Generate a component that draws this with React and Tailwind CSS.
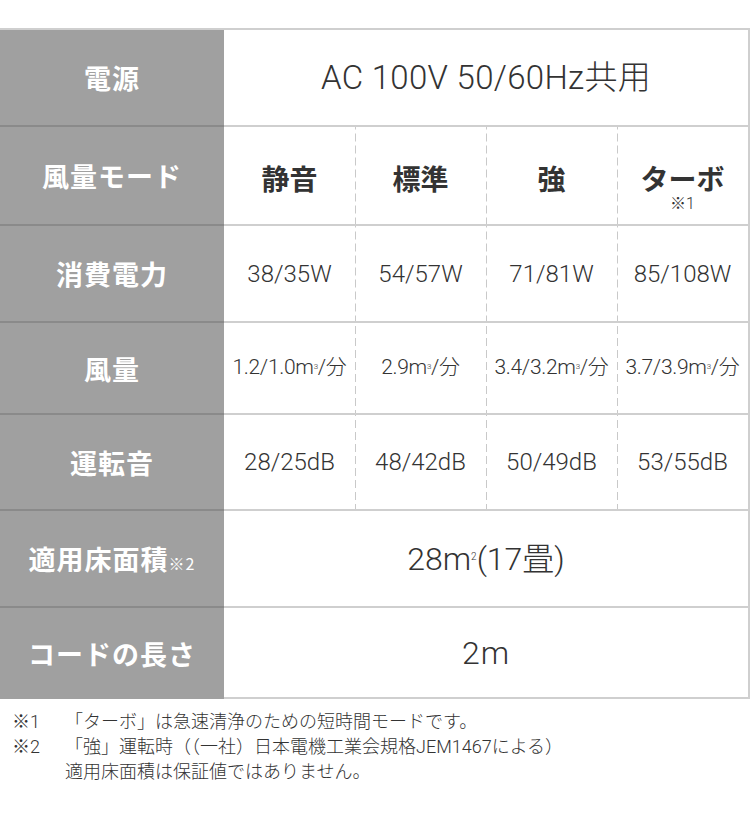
const font = "font-['Liberation_Sans','Noto_Sans_CJK_JP',sans-serif]"
const jp = "font-['Noto_Sans_CJK_JP',sans-serif]"
const light = "font-['Roboto','Noto_Sans_CJK_JP',sans-serif] font-light"

const dash = "bg-[linear-gradient(#c9c9c9_66%,transparent_66%)] bg-[length:1px_12px] bg-repeat-y bg-left"

const M3 = () => (
    <>m<sup className="text-[8px] relative -top-[5px]">3</sup></>
)

const Row = ({ label, h, last, children }) => (
    <div className="flex" style={{ height: h }}>
        <div className={`w-[224px] shrink-0 bg-[#a0a0a0] flex items-center justify-center ${last ? "" : "border-b-2 border-[#8a8a8a]"}`}>
            {label}
        </div>
        <div className="flex-1 flex border-b-2 border-r-2 border-[#cfcfcf]">
            {children}
        </div>
    </div>
)

const Label = ({ children }) => (
    <p className={`${jp} text-white font-bold text-[27px] leading-none tracking-[1px]`}>{children}</p>
)

const Cells = ({ items, size }) => (
    <>
        {items.map((v, i) => (
            <div key={i} className={`flex-1 flex items-center justify-center text-[#333] ${light} ${size} ${i > 0 ? dash : ""}`}>
                {v}
            </div>
        ))}
    </>
)

const App = () => {
    return (
        <div className={`w-[750px] h-[820px] bg-white ${font}`}>
            <div className="pt-[28px]">
                <div className="border-t-2 border-[#cfcfcf]">
                    <Row label={<Label>電源</Label>} h={97}>
                        <div className="flex-1 flex items-center justify-center">
                            <p className={`${light} text-[33px] text-[#333] tracking-[0.3px]`}>AC 100V 50/60Hz共用</p>
                        </div>
                    </Row>
                    <Row label={<Label>風量モード</Label>} h={99}>
                        {["静音", "標準", "強", "ターボ"].map((v, i) => (
                            <div key={i} className={`flex-1 flex flex-col items-center pt-[33px] ${i > 0 ? dash : ""}`}>
                                <p className={`${jp} font-bold text-[28px] leading-[36px] text-[#333]`}>{v}</p>
                                {i === 3 && <p className={`${light} text-[16px] leading-[16px] text-[#333]`}>※1</p>}
                            </div>
                        ))}
                    </Row>
                    <Row label={<Label>消費電力</Label>} h={97}>
                        <Cells size="text-[24px]" items={["38/35W", "54/57W", "71/81W", "85/108W"]} />
                    </Row>
                    <Row label={<Label>風量</Label>} h={92}>
                        <Cells
                            size="text-[21px] tracking-[-0.3px]"
                            items={[
                                <span>1.2/1.0<M3 />/分</span>,
                                <span>2.9<M3 />/分</span>,
                                <span>3.4/3.2<M3 />/分</span>,
                                <span>3.7/3.9<M3 />/分</span>,
                            ]}
                        />
                    </Row>
                    <Row label={<Label>運転音</Label>} h={96}>
                        <Cells size="text-[24px]" items={["28/25dB", "48/42dB", "50/49dB", "53/55dB"]} />
                    </Row>
                    <Row label={<Label>適用床面積<span className="text-[16px] font-normal">※2</span></Label>} h={97}>
                        <div className="flex-1 flex items-center justify-center">
                            <p className={`${light} text-[32px] text-[#333]`}>28m<sup className="text-[10px] relative -top-[10px]">2</sup>(17畳)</p>
                        </div>
                    </Row>
                    <Row label={<Label>コードの長さ</Label>} h={91} last>
                        <div className="flex-1 flex items-center justify-center">
                            <p className={`${light} text-[32px] text-[#333] tracking-[1px]`}>2m</p>
                        </div>
                    </Row>
                </div>
            </div>
            <div className={`mt-[10px] pl-[12px] text-[18px] leading-[25px] text-[#333] ${light}`}>
                <div className="flex">
                    <span className="w-[53px] shrink-0">※1</span>
                    <span>「ターボ」は急速清浄のための短時間モードです。</span>
                </div>
                <div className="flex">
                    <span className="w-[53px] shrink-0">※2</span>
                    <span>「強」運転時（（一社）日本電機工業会規格JEM1467による）<br />適用床面積は保証値ではありません。</span>
                </div>
            </div>
        </div>
    )
}

export default App
